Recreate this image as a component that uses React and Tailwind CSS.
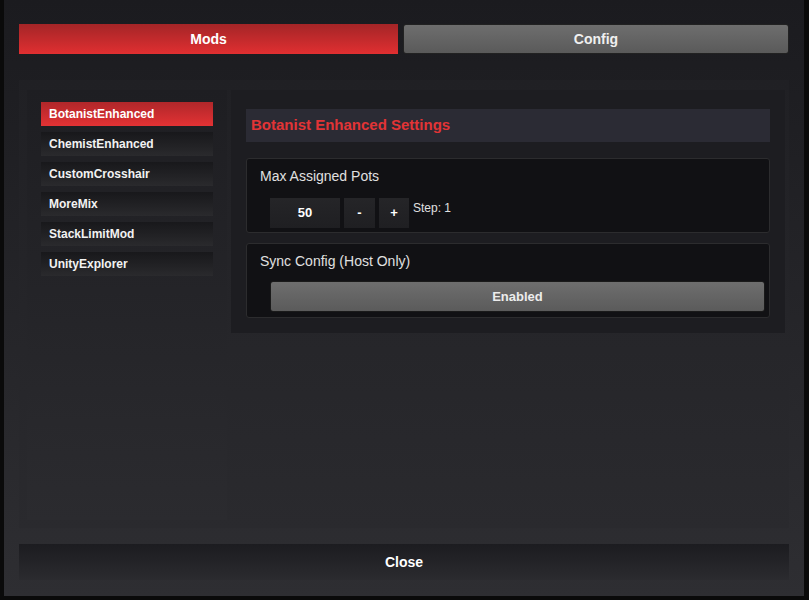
const MODS = [
  'BotanistEnhanced',
  'ChemistEnhanced',
  'CustomCrosshair',
  'MoreMix',
  'StackLimitMod',
  'UnityExplorer',
];

export default function App() {
  const active = 'BotanistEnhanced';

  return (
    <div
      className="w-[809px] h-[600px] bg-[#0a0a0a] flex pl-1 pr-[5px] pb-1 overflow-hidden"
      style={{ fontFamily: '"Liberation Sans", Arial, sans-serif' }}
    >
      {/* ── Window ─────────────────────────────────────────── */}
      <div className="flex-1 flex flex-col bg-gradient-to-b from-[#1b1b1f] to-[#2e2e32] px-[15px] pt-6">
        {/* Tabs */}
        <div className="h-[30px] flex gap-[5px]">
          <button className="w-[379px] h-full bg-gradient-to-b from-[#a42527] to-[#e12f31] text-white font-bold text-[14px]">
            Mods
          </button>
          <button className="flex-1 h-full rounded-[3px] border border-[#222] bg-gradient-to-b from-[#6e6e6e] to-[#5a5a5a] text-[#f0f0f0] font-bold text-[14px]">
            Config
          </button>
        </div>

        {/* Content */}
        <div className="mt-[26px] h-[448px] flex bg-gradient-to-b from-[#202024] to-[#2a2a2e] pt-[10px] pl-2 pb-2 pr-1">
          {/* Mod list */}
          <div className="w-[200px] h-full bg-gradient-to-b from-[#1e1e22] to-[#2b2b2f] pt-3 pl-[14px] flex flex-col gap-[6px]">
            {MODS.map((m) => (
              <div
                key={m}
                className={
                  m === active
                    ? 'w-[172px] h-[24px] flex items-center pl-2 text-[12px] font-bold text-white bg-gradient-to-b from-[#b0272a] to-[#e33234]'
                    : 'w-[172px] h-[24px] flex items-center pl-2 text-[12px] font-bold text-[#f2f2f2] bg-gradient-to-b from-[#18181b] to-[#2a2a2d]'
                }
              >
                {m}
              </div>
            ))}
          </div>

          {/* Settings */}
          <div className="ml-1 w-[554px] h-[243px] bg-[#1d1d21] pt-[19px] pl-[15px] pr-[15px] flex flex-col">
            <div className="h-[33px] w-[524px] bg-[#2b2b34] flex items-center pl-[5px] text-[15px] font-bold text-[#e23436]">
              Botanist Enhanced Settings
            </div>

            <div className="mt-4 w-[524px] h-[75px] bg-[#111114] border border-[#2c2c2e] rounded-[3px] pl-[13px] pt-[8px]">
              <div className="text-[14px] text-[#e0e0e0] leading-[18px]">Max Assigned Pots</div>
              <div className="mt-[13px] ml-[10px] flex items-start gap-[4px]">
                <div className="w-[70px] h-[30px] bg-gradient-to-b from-[#252528] to-[#1f1f22] flex items-center justify-center text-[13px] font-bold text-white">
                  50
                </div>
                <div className="w-[31px] h-[30px] bg-gradient-to-b from-[#252528] to-[#1f1f22] flex items-center justify-center text-[13px] font-bold text-white">
                  -
                </div>
                <div className="w-[30px] h-[30px] bg-gradient-to-b from-[#252528] to-[#1f1f22] flex items-center justify-center text-[13px] font-bold text-white">
                  +
                </div>
                <div className="text-[12px] text-[#e0e0e0] leading-[16px] pt-[2px]">Step: 1</div>
              </div>
            </div>

            <div className="mt-[10px] w-[524px] h-[75px] bg-[#111114] border border-[#2c2c2e] rounded-[3px] pl-[13px] pt-[8px]">
              <div className="text-[14px] text-[#e0e0e0] leading-[18px]">Sync Config (Host Only)</div>
              <button className="mt-[11px] ml-[10px] w-[495px] h-[31px] rounded-[3px] border border-[#1a1a1a] bg-gradient-to-b from-[#6e6e6e] to-[#5b5b5b] text-[13px] font-bold text-[#ececec]">
                Enabled
              </button>
            </div>
          </div>
        </div>

        {/* Close */}
        <div className="mt-4 h-[36px] bg-gradient-to-b from-[#1c1c20] to-[#2b2b2f] flex items-center justify-center text-[14px] font-bold text-white">
          Close
        </div>
      </div>
    </div>
  );
}
